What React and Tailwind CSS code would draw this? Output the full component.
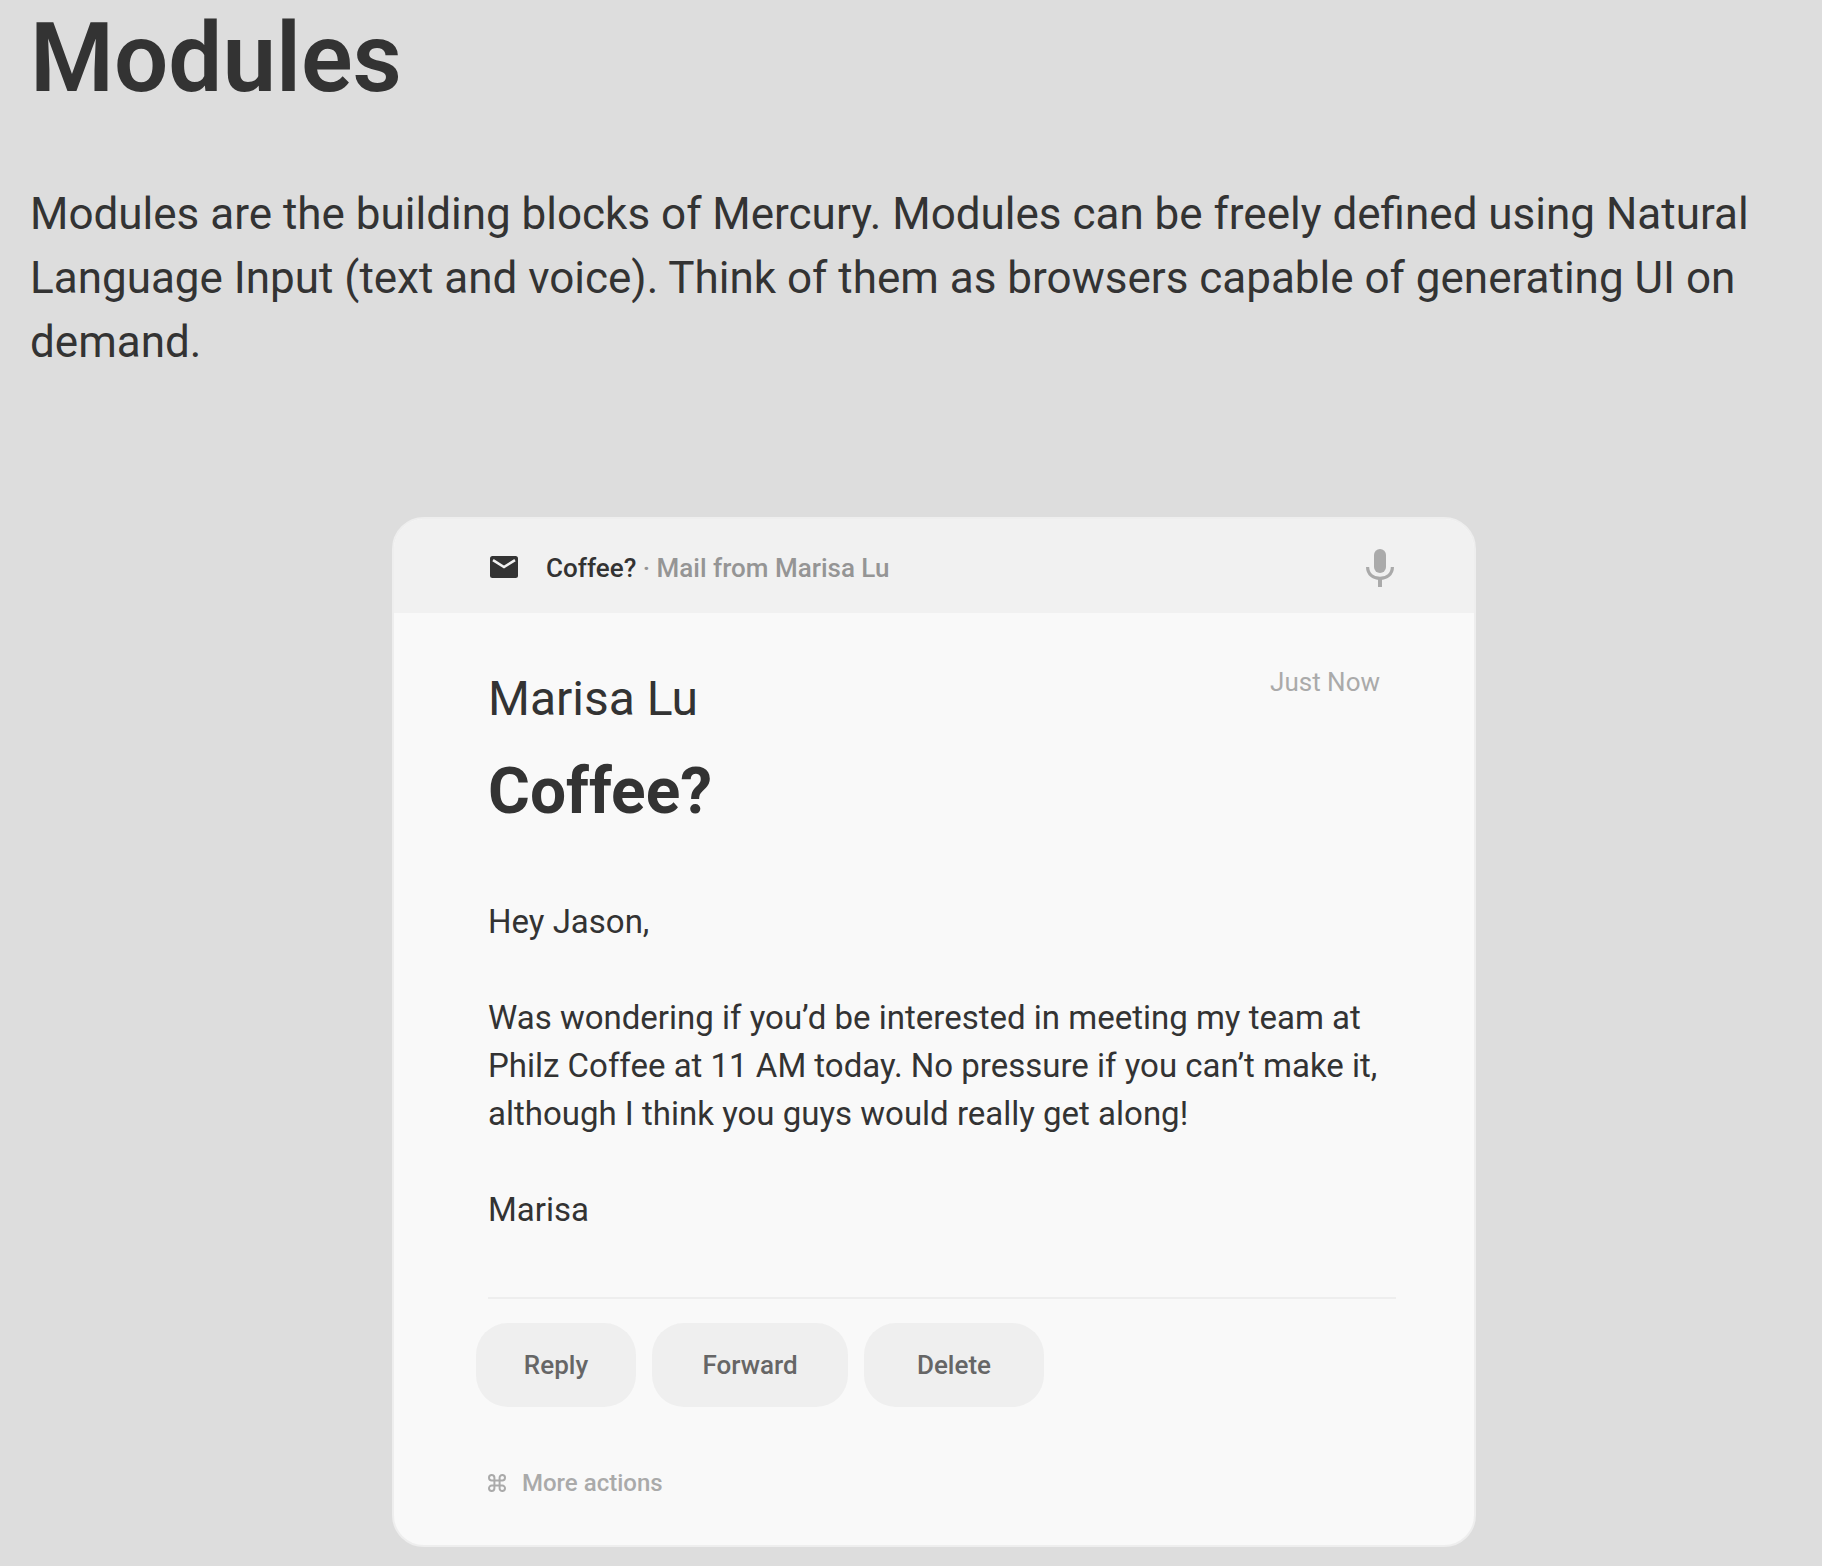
const actions = [
  { label: "Reply", width: "w-[160px]" },
  { label: "Forward", width: "w-[196px]" },
  { label: "Delete", width: "w-[180px]" },
];

function MailIcon() {
  return (
    <svg className="shrink-0" width="28" height="24" viewBox="0 0 28 24" aria-hidden="true">
      <rect width="28" height="22" rx="2.5" fill="#333333" />
      <path d="M3 4.2 14 11 25 4.2" fill="none" stroke="#f1f1f1" strokeWidth="2.6" />
    </svg>
  );
}

function MicIcon() {
  return (
    <svg width="28" height="38" viewBox="0 0 28 38" aria-hidden="true">
      <rect x="8" width="12" height="24" rx="6" fill="#aaaaaa" />
      <path d="M1.6 18C1.6 25 7 29.4 14 29.4S26.4 25 26.4 18" fill="none" stroke="#aaaaaa" strokeWidth="3.2" />
      <path d="M14 29v9" stroke="#aaaaaa" strokeWidth="4" />
    </svg>
  );
}

function CommandIcon() {
  return (
    <svg width="18" height="18" viewBox="0 0 18 18" fill="none" stroke="#aaaaaa" strokeWidth="2" aria-hidden="true">
      <path d="M6.4 6.4H3.7A2.7 2.7 0 1 1 6.4 3.7v10.6a2.7 2.7 0 1 1-2.7-2.7h10.6a2.7 2.7 0 1 1-2.7 2.7V3.7a2.7 2.7 0 1 1 2.7 2.7z" />
    </svg>
  );
}

export default function App() {
  return (
    <main className="min-h-screen bg-[#dddddd] px-[30px] pt-[10px] pb-[19px] font-[Roboto,'Liberation_Sans',sans-serif] text-[#333333]">
      <h1 className="text-[96px] leading-[96px] font-semibold">Modules</h1>
      <p className="mt-[76px] text-[44px] leading-[64px]">
        Modules are the building blocks of Mercury. Modules can be freely defined using Natural Language Input (text
        and voice). Think of them as browsers capable of generating UI on demand.
      </p>
      <div className="mt-[143px] pl-[46px]">
        <article className="mx-auto w-full max-w-[1084px] overflow-hidden rounded-[32px] border-2 border-[#eeeeee] bg-[#f9f9f9]">
          <header className="flex h-[94px] items-center bg-[#f1f1f1] pt-1 pr-20 pl-24">
            <MailIcon />
            <p className="ml-7 text-[26px] leading-8 font-medium text-[#959595]">
              <span className="text-[#333333]">Coffee?</span> · Mail from Marisa Lu
            </p>
            <button type="button" className="ml-auto" aria-label="Voice input">
              <MicIcon />
            </button>
          </header>
          <div className="pt-[53px] pr-[78px] pb-[46px] pl-[94px]">
            <div className="flex items-start justify-between">
              <p className="pt-[3px] text-[48px] leading-[60px]">Marisa Lu</p>
              <time className="mr-4 text-[26px] leading-8 text-[#aaaaaa]">Just Now</time>
            </div>
            <h2 className="mt-[27px] text-[64px] leading-[72px] font-bold">Coffee?</h2>
            <div className="mt-[70px] flex flex-col gap-12 text-[33px] leading-[48px]">
              <p>Hey Jason,</p>
              <p>
                Was wondering if you’d be interested in meeting my team at Philz Coffee at 11 AM today. No pressure if
                you can’t make it, although I think you guys would really get along!
              </p>
              <p>Marisa</p>
            </div>
            <hr className="mt-[63px] border-t-2 border-[#eeeeee]" />
            <div className="mt-6 -ml-3 flex flex-wrap gap-4">
              {actions.map(({ label, width }) => (
                <button
                  key={label}
                  type="button"
                  className={`${width} h-[84px] rounded-[32px] bg-[#efefef] text-[26px] leading-8 font-medium text-[#666666]`}
                >
                  {label}
                </button>
              ))}
            </div>
            <button
              type="button"
              className="mt-[60px] flex items-center gap-4 text-[24px] leading-8 font-medium text-[#aaaaaa]"
            >
              <CommandIcon />
              More actions
            </button>
          </div>
        </article>
      </div>
    </main>
  );
}
